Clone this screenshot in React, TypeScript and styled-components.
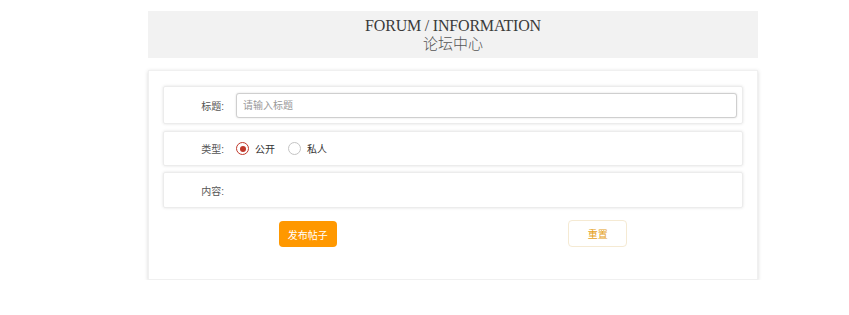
import React, {useState} from 'react';
import styled, {createGlobalStyle} from 'styled-components';

const GlobalStyle = createGlobalStyle`
  body {
    margin: 0;
    background: #fff;
    font-family: 'Liberation Sans', 'Noto Sans CJK SC', sans-serif;
  }
`;

const PageWrap = styled.div`
  width: 610px;
  margin-left: 148px;
  padding-top: 11px;
`;

const Header = styled.div`
  height: 47px;
  background: #f2f2f2;
  display: flex;
  flex-direction: column;
  align-items: center;
  justify-content: center;
  color: #3a3a3a;
  font-family: 'Liberation Serif', 'Noto Sans CJK SC', serif;
`;

const TitleEn = styled.div`
  font-size: 16px;
  line-height: 19px;
  letter-spacing: -0.2px;
`;

const TitleCn = styled.div`
  font-size: 15px;
  line-height: 18px;
  font-weight: 300;
  color: #555;
`;

const Card = styled.form`
  margin-top: 12px;
  height: 210px;
  box-sizing: border-box;
  padding: 15px 14px 0;
  background: #fff;
  border: 1px solid #f0f0f0;
  box-shadow: 0 1px 4px rgba(0, 0, 0, 0.16);
  display: flex;
  flex-direction: column;
`;

const Row = styled.div<{$h: number; $gap: number}>`
  height: ${p => p.$h}px;
  margin-bottom: ${p => p.$gap}px;
  flex-shrink: 0;
  box-sizing: border-box;
  border: 1px solid #ececec;
  border-radius: 2px;
  box-shadow: 0 0 3px rgba(0, 0, 0, 0.12);
  display: flex;
  align-items: center;
  padding-right: 5px;
`;

const Label = styled.label`
  width: 63px;
  box-sizing: border-box;
  padding-right: 3px;
  flex-shrink: 0;
  text-align: right;
  margin-right: 9px;
  font-size: 10px;
  color: #555;
`;

const TextInput = styled.input`
  flex: 1;
  height: 25px;
  box-sizing: border-box;
  border: 1px solid #cfcfcf;
  border-radius: 3px;
  box-shadow: 0 0 2px rgba(0, 0, 0, 0.15);
  padding: 0 6px;
  font-size: 10px;
  font-family: inherit;
  outline: none;

  &::placeholder {
    color: #999;
  }
`;

const RadioOption = styled.label`
  display: flex;
  align-items: center;
  font-size: 10px;
  color: #333;
  margin-right: 13px;
  cursor: pointer;
`;

const RadioDot = styled.span<{$on: boolean}>`
  width: 13px;
  height: 13px;
  box-sizing: border-box;
  border-radius: 50%;
  border: 1px solid ${p => (p.$on ? '#c0392b' : '#c4c4c4')};
  margin-right: 6px;
  display: flex;
  align-items: center;
  justify-content: center;

  &::after {
    content: '';
    width: 6px;
    height: 6px;
    border-radius: 50%;
    background: ${p => (p.$on ? '#c0392b' : 'transparent')};
  }
`;

const ButtonRow = styled.div`
  display: flex;
  justify-content: space-around;
  align-items: flex-start;
  margin-top: 13px;
`;

const SubmitButton = styled.button`
  width: 58px;
  height: 26px;
  border: none;
  border-radius: 4px;
  background: #ff9800;
  color: #fff;
  font-size: 10px;
  font-family: inherit;
  cursor: pointer;
`;

const ResetButton = styled.button`
  width: 59px;
  height: 27px;
  margin-top: -1px;
  border: 1px solid #f5ead3;
  border-radius: 4px;
  background: #fff;
  color: #e5a21a;
  font-size: 10px;
  font-family: inherit;
  cursor: pointer;
`;

function App() {
  const [type, setType] = useState('public');
  const [title, setTitle] = useState('');

  return (
    <>
      <GlobalStyle />
      <PageWrap>
        <Header>
          <TitleEn>FORUM / INFORMATION</TitleEn>
          <TitleCn>论坛中心</TitleCn>
        </Header>
        <Card onSubmit={e => e.preventDefault()}>
          <Row $h={38} $gap={7}>
            <Label>标题:</Label>
            <TextInput placeholder="请输入标题" value={title} onChange={e => setTitle(e.target.value)} />
          </Row>
          <Row $h={35} $gap={6}>
            <Label>类型:</Label>
            <RadioOption onClick={() => setType('public')}>
              <RadioDot $on={type === 'public'} />
              公开
            </RadioOption>
            <RadioOption onClick={() => setType('private')}>
              <RadioDot $on={type === 'private'} />
              私人
            </RadioOption>
          </Row>
          <Row $h={36} $gap={0}>
            <Label>内容:</Label>
          </Row>
          <ButtonRow>
            <SubmitButton type="submit">发布帖子</SubmitButton>
            <ResetButton type="button" onClick={() => setTitle('')}>
              重置
            </ResetButton>
          </ButtonRow>
        </Card>
      </PageWrap>
    </>
  );
}

export default App;
